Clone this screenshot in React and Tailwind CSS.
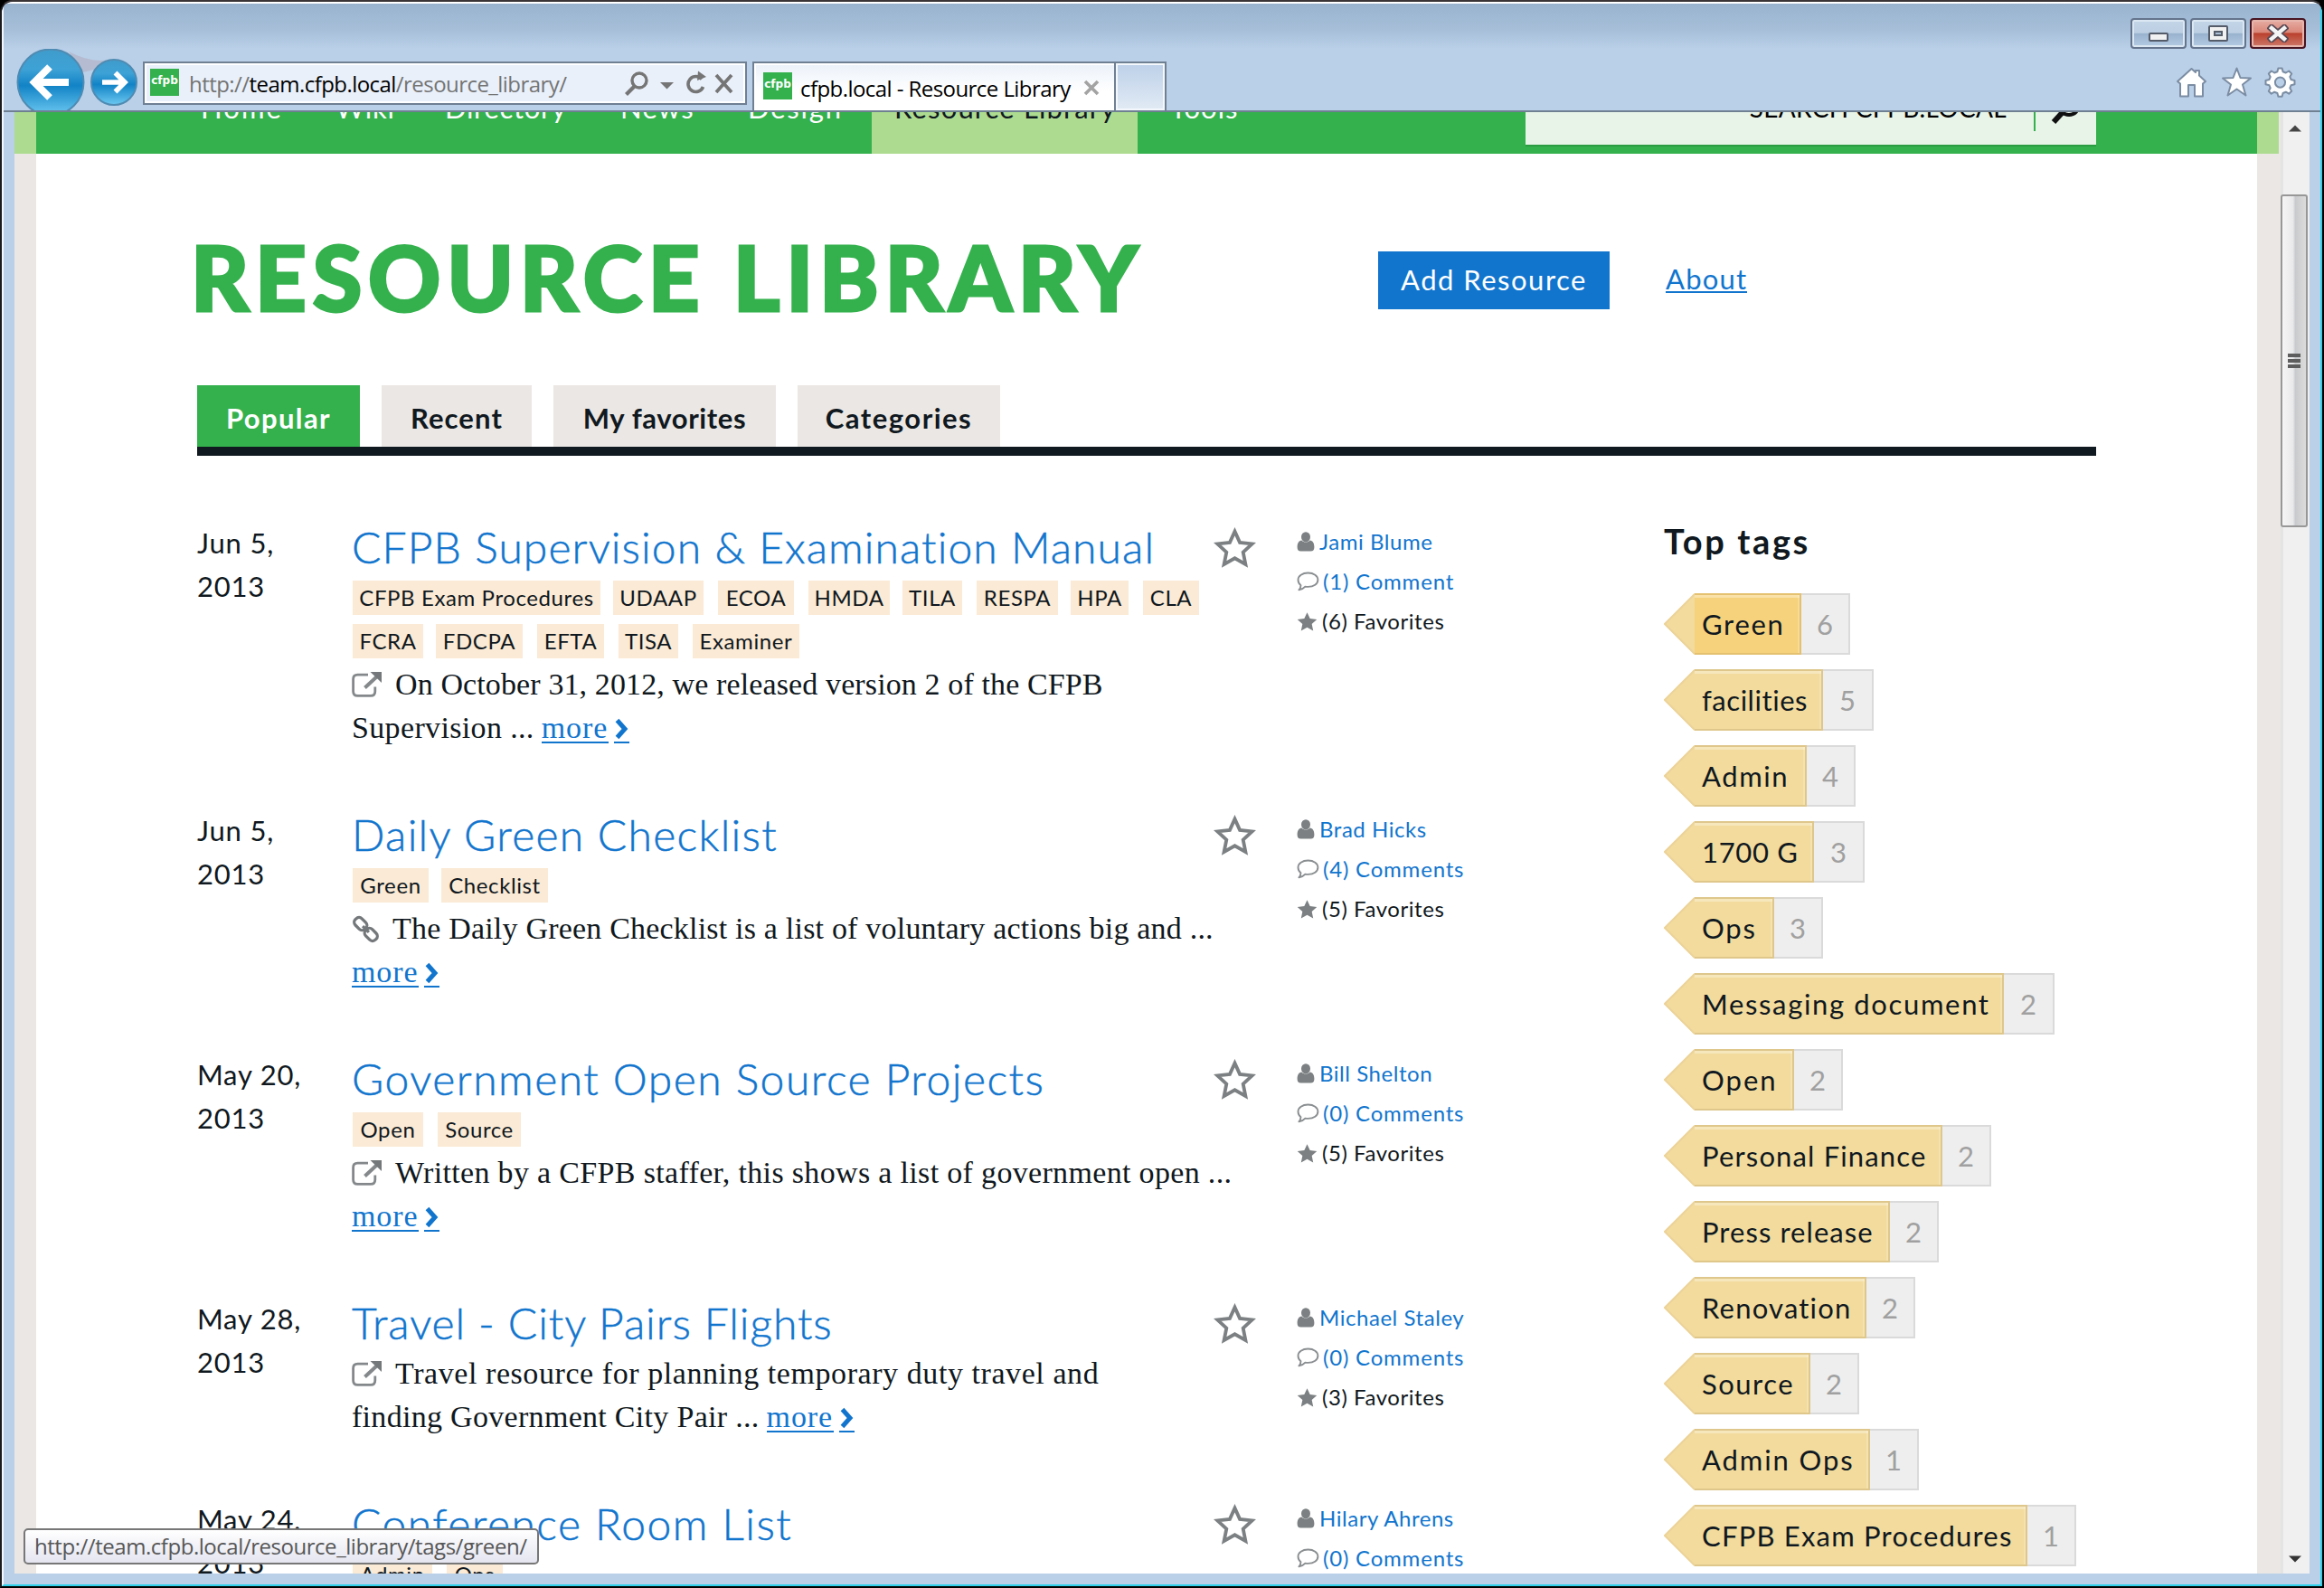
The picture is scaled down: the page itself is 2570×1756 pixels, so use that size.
const NAV = [
  { label: "Home", box: "w-[117px] pl-[4px] tracking-[2.1px]" },
  { label: "Wiki", box: "w-[121px] pl-[36px] tracking-[0.8px]" },
  { label: "Directory", box: "w-[194px] pl-[36px] tracking-[0.7px]" },
  { label: "News", box: "w-[142px] pl-[36px] tracking-[1.2px]" },
  { label: "Design", box: "w-[172px] pl-[35px] tracking-[1.8px]" },
  { label: "Resource Library", box: "w-[294px] pl-[25px] tracking-[1.15px] bg-[#addc91] text-[#101820]" },
  { label: "Tools", box: "w-[150px] pl-[36px] tracking-[1px]" },
];

const TABS = [
  { label: "Popular", box: "w-[180px] bg-[#34b14d] text-white tracking-[1.4px]" },
  { label: "Recent", box: "w-[166px] bg-[#ebe7e4] tracking-[1.1px]" },
  { label: "My favorites", box: "w-[246px] bg-[#ebe7e4] tracking-[0.6px]" },
  { label: "Categories", box: "w-[224px] bg-[#ebe7e4] tracking-[1.5px]" },
];

const ROWS = [
  {
    date: ["Jun 5,", "2013"],
    height: "h-[318px]",
    title: "CFPB Supervision & Examination Manual",
    titleCls: "tracking-[1.1px]",
    tags: [
      [
        ["CFPB Exam Procedures", "w-[274px] mr-[14px]"],
        ["UDAAP", "w-[100px] mr-[16px]"],
        ["ECOA", "w-[84px] mr-[16px]"],
        ["HMDA", "w-[90px] mr-[14px]"],
        ["TILA", "w-[66px] mr-[16px]"],
        ["RESPA", "w-[90px] mr-[14px]"],
        ["HPA", "w-[64px] mr-[16px]"],
        ["CLA", "w-[62px]"],
      ],
      [
        ["FCRA", "w-[78px] mr-[14px]"],
        ["FDCPA", "w-[96px] mr-[16px]"],
        ["EFTA", "w-[74px] mr-[16px]"],
        ["TISA", "w-[66px] mr-[16px]"],
        ["Examiner", "w-[118px]"],
      ],
    ],
    icon: "ext",
    lines: [
      ["On October 31, 2012, we released version 2 of the CFPB", "tracking-[0.12px]"],
      ["Supervision ...", "tracking-[0.35px]"],
    ],
    more: "inline",
    author: "Jami Blume",
    comments: "(1) Comment",
    favorites: "(6) Favorites",
  },
  {
    date: ["Jun 5,", "2013"],
    height: "h-[270px]",
    title: "Daily Green Checklist",
    titleCls: "tracking-[1.3px]",
    tags: [[["Green", "w-[84px] mr-[14px]"], ["Checklist", "w-[118px]"]]],
    icon: "link",
    lines: [["The Daily Green Checklist is a list of voluntary actions big and ...", "tracking-[0.2px]"]],
    more: "own",
    author: "Brad Hicks",
    comments: "(4) Comments",
    favorites: "(5) Favorites",
  },
  {
    date: ["May 20,", "2013"],
    height: "h-[270px]",
    title: "Government Open Source Projects",
    titleCls: "tracking-[1.5px]",
    tags: [[["Open", "w-[78px] mr-[16px]"], ["Source", "w-[92px]"]]],
    icon: "ext",
    lines: [["Written by a CFPB staffer, this shows a list of government open ...", "tracking-[0.33px]"]],
    more: "own",
    author: "Bill Shelton",
    comments: "(0) Comments",
    favorites: "(5) Favorites",
  },
  {
    date: ["May 28,", "2013"],
    height: "h-[222px]",
    title: "Travel - City Pairs Flights",
    titleCls: "tracking-[0.95px]",
    tags: [],
    icon: "ext",
    lines: [
      ["Travel resource for planning temporary duty travel and", "tracking-[0.57px]"],
      ["finding Government City Pair ...", "tracking-[0.3px]"],
    ],
    more: "inline",
    author: "Michael Staley",
    comments: "(0) Comments",
    favorites: "(3) Favorites",
  },
  {
    date: ["May 24,", "2013"],
    height: "h-[222px]",
    title: "Conference Room List",
    titleCls: "tracking-[1.5px]",
    tags: [[["Admin", "w-[88px] mr-[16px]"], ["Ops", "w-[62px]"]]],
    icon: null,
    lines: [],
    author: "Hilary Ahrens",
    comments: "(0) Comments",
  },
];

const TOP_TAGS = [
  ["Green", 6, "w-[118px] tracking-[1.7px] bg-[#f6d27c] border-[#e3c170]", "w-[54px]"],
  ["facilities", 5, "w-[142px] tracking-[0.55px] bg-[#f2db9c] border-[#dfc78c]", "w-[56px]"],
  ["Admin", 4, "w-[124px] tracking-[1.6px] bg-[#f2db9c] border-[#dfc78c]", "w-[54px]"],
  ["1700 G", 3, "w-[132px] tracking-[0.7px] bg-[#f2db9c] border-[#dfc78c]", "w-[56px]"],
  ["Ops", 3, "w-[88px] tracking-[1.8px] bg-[#f2db9c] border-[#dfc78c]", "w-[54px]"],
  ["Messaging document", 2, "w-[342px] tracking-[1.65px] bg-[#f2db9c] border-[#dfc78c]", "w-[56px]"],
  ["Open", 2, "w-[110px] tracking-[2px] bg-[#f2db9c] border-[#dfc78c]", "w-[54px]"],
  ["Personal Finance", 2, "w-[274px] tracking-[1.15px] bg-[#f2db9c] border-[#dfc78c]", "w-[54px]"],
  ["Press release", 2, "w-[216px] tracking-[1.05px] bg-[#f2db9c] border-[#dfc78c]", "w-[54px]"],
  ["Renovation", 2, "w-[190px] tracking-[1.2px] bg-[#f2db9c] border-[#dfc78c]", "w-[54px]"],
  ["Source", 2, "w-[128px] tracking-[1.5px] bg-[#f2db9c] border-[#dfc78c]", "w-[54px]"],
  ["Admin Ops", 1, "w-[194px] tracking-[1.9px] bg-[#f2db9c] border-[#dfc78c]", "w-[54px]"],
  ["CFPB Exam Procedures", 1, "w-[368px] tracking-[1.2px] bg-[#f2db9c] border-[#dfc78c]", "w-[54px]"],
];

const STAR =
  "M12 1.2 L15.3 8.4 L23.2 9.3 L17.4 14.6 L19 22.4 L12 18.5 L5 22.4 L6.6 14.6 L0.8 9.3 L8.7 8.4 Z";

function StarOutline() {
  return (
    <svg viewBox="0 0 24 24" className="h-[46px] w-[47px]" fill="none" stroke="#7c8082" strokeWidth="2" strokeLinejoin="miter">
      <path d="M12 2.4 L14.9 8.8 L22 9.6 L16.8 14.4 L18.2 21.4 L12 17.9 L5.8 21.4 L7.2 14.4 L2 9.6 L9.1 8.8 Z" />
    </svg>
  );
}

function UserIcon() {
  return (
    <svg viewBox="0 0 20 22" className="h-[22px] w-[20px]" fill="#7c8082">
      <ellipse cx="10" cy="5.8" rx="5" ry="5.6" />
      <path d="M5.4 9.4 C2.4 9.8 0.6 12.4 0.6 17 C0.6 20 1.9 21.6 4.4 21.6 H15.6 C18.1 21.6 19.4 20 19.4 17 C19.4 12.4 17.6 9.8 14.6 9.4 C12 12.2 8 12.2 5.4 9.4 Z" />
    </svg>
  );
}

function CommentIcon() {
  return (
    <svg viewBox="0 0 25 22" className="h-[22px] w-[25px]" fill="none" stroke="#8a8e90" strokeWidth="1.9" strokeLinejoin="round">
      <path d="M12.5 1.5 C18.8 1.5 23.4 4.9 23.4 9.2 C23.4 13.5 18.8 16.9 12.5 16.9 C11.4 16.9 10.4 16.8 9.4 16.6 C7.6 18.6 5.4 19.9 2.4 20.4 C3.7 19 4.4 17.3 4.5 15.2 C2.6 13.7 1.5 11.5 1.5 9.2 C1.5 4.9 6.2 1.5 12.5 1.5 Z" />
    </svg>
  );
}

function ExternalIcon() {
  return (
    <svg viewBox="0 0 34 30" className="mt-[9px] mr-[14px] h-[30px] w-[34px] shrink-0" fill="none" stroke="#84888a">
      <path d="M18 4.2 H6.5 C3.4 4.2 1.6 6 1.6 9 V22.5 C1.6 25.6 3.4 27.4 6.5 27.4 H21 C24.1 27.4 25.8 25.6 25.8 22.5 V17.5" strokeWidth="2.8" />
      <path d="M14.5 18.5 L28 6" strokeWidth="4" />
      <path d="M20.5 1 H33 V13 Z" fill="#74787a" stroke="none" />
    </svg>
  );
}

function LinkIcon() {
  return (
    <svg viewBox="0 0 32 32" className="mt-[9px] mr-[14px] h-[31px] w-[31px] shrink-0" fill="none" stroke="#74787a" strokeWidth="3.4">
      <rect x="2.2" y="4.6" width="15.5" height="10.5" rx="4.6" transform="rotate(45 10 10)" />
      <rect x="14.3" y="16.9" width="15.5" height="10.5" rx="4.6" transform="rotate(45 22 22)" />
      <path d="M12.5 12.5 L19.5 19.5" />
    </svg>
  );
}

function More() {
  return (
    <span className="flex text-[#1175ce]">
      <span className="h-[41px] w-[74px] border-b-[2px] border-[#1175ce] tracking-[0.9px]">more</span>
      <span className="ml-[6px] flex h-[41px] w-[17px] justify-center border-b-[2px] border-[#1175ce]">
        <svg viewBox="0 0 15 24" className="mt-[13px] h-[24px] w-[15px]" fill="none" stroke="#1175ce" strokeWidth="5">
          <path d="M2.5 2.5 L11 12 L2.5 21.5" />
        </svg>
      </span>
    </span>
  );
}

function Favicon() {
  return (
    <span className="flex h-[30px] w-[32px] shrink-0 items-start justify-center bg-[#34b14d] font-['DejaVu_Sans'] text-[12px] leading-[27px] font-bold text-white">
      cfpb
    </span>
  );
}

function Chrome() {
  return (
    <header className="flex h-[120px] shrink-0 flex-col border-b-[2px] border-[#6f8093] bg-[linear-gradient(180deg,#99b3cf_0px,#a6bed8_28px,#bad0e9_50px,#bad0e9_118px)] font-['Open_Sans',sans-serif]">
      <div className="flex h-[50px] justify-end gap-[4px] pt-[16px] pr-[16px]">
        <div className="flex h-[34px] w-[62px] items-end justify-center rounded-[4px] border-[2px] border-[#64748c] bg-[linear-gradient(180deg,#c3d5e7_0%,#bccfe3_48%,#98b1cd_50%,#b5cce4_100%)] pb-[6px] shadow-[inset_0_0_0_2px_#dbe7f3]">
          <span className="h-[10px] w-[22px] rounded-[2px] border-[2px] border-[#545b69] bg-[#f1f1f1]" />
        </div>
        <div className="flex h-[34px] w-[62px] items-center justify-center rounded-[4px] border-[2px] border-[#64748c] bg-[linear-gradient(180deg,#c3d5e7_0%,#bccfe3_48%,#98b1cd_50%,#b5cce4_100%)] shadow-[inset_0_0_0_2px_#dbe7f3]">
          <span className="flex h-[18px] w-[22px] items-center justify-center rounded-[2px] border-[2px] border-[#545b69] bg-[#f1f1f1]">
            <span className="h-[6px] w-[10px] border-[2px] border-[#545b69] bg-[#a9bdd4]" />
          </span>
        </div>
        <div className="flex h-[34px] w-[62px] items-center justify-center rounded-[4px] border-[2px] border-[#481421] bg-[linear-gradient(180deg,#e7ada4_0%,#d98678_46%,#b9402d_50%,#cf7a6b_100%)] shadow-[inset_0_0_0_2px_#e6b5ac]">
          <svg viewBox="0 0 24 20" className="h-[20px] w-[24px]" fill="none">
            <path d="M5 4 L19 16 M19 4 L5 16" stroke="#5a4a55" strokeWidth="8" strokeLinecap="square" />
            <path d="M5 4 L19 16 M19 4 L5 16" stroke="#f4f4f4" strokeWidth="4.4" strokeLinecap="square" />
          </svg>
        </div>
      </div>

      <div className="flex h-[68px] justify-between">
        <div className="flex pl-[12px]">
          <svg viewBox="0 0 140 68" className="mr-[2px] h-[68px] w-[140px]">
            <defs>
              <linearGradient id="orb" x1="0" y1="0" x2="0" y2="1">
                <stop offset="0" stopColor="#3f9ccb" />
                <stop offset="0.3" stopColor="#3ea2d6" />
                <stop offset="0.55" stopColor="#1283c6" />
                <stop offset="1" stopColor="#6cc9f1" />
              </linearGradient>
            </defs>
            <path d="M60 3 Q85 16 104 12 L92 22 L76 26 Z" fill="#b4b6ca" opacity="0.8" />
            <circle cx="40" cy="37" r="36.5" fill="url(#orb)" stroke="#4f8bb2" strokeWidth="2" />
            <circle cx="110" cy="37" r="25" fill="url(#orb)" stroke="#4f8bb2" strokeWidth="2" />
            <path d="M60 37 H24 M39 20 L22 37 L39 54" fill="none" stroke="#fff" strokeWidth="8" />
            <path d="M97 37 H121 M111.500 26.500 L122 37 L111.500 47.500" fill="none" stroke="#fff" strokeWidth="5.600" />
          </svg>
          <div className="mt-[14px] flex h-[48px] w-[668px] items-start border-[2px] border-[#6f8093] bg-[#e9f0fa] pt-[6px] pl-[6px] shadow-[inset_0_0_0_2px_#fff]">
            <Favicon />
            <span className="ml-[11px] w-[480px] text-[24px] leading-[34px] tracking-[-0.55px] whitespace-nowrap text-[#747474]">
              http://<span className="text-black">team.cfpb.local</span>/resource_library/
            </span>
            <svg viewBox="0 0 126 30" className="mt-[2px] h-[30px] w-[126px]" fill="none" stroke="#757575">
              <circle cx="18" cy="11" r="8" strokeWidth="3.4" />
              <path d="M12.500 17.500 L3.500 26.500" strokeWidth="4.200" />
              <path d="M41 13 H56 L48.500 20.500 Z" fill="#757575" stroke="none" />
              <path d="M87 9.500 A8.500 8.500 0 1 0 88.500 18" strokeWidth="3.600" />
              <path d="M83 0.500 L92 7 L82 11 Z" fill="#757575" stroke="none" />
              <path d="M103 5 L120 24 M120 5 L103 24" strokeWidth="3.800" />
            </svg>
          </div>
          <div className="mt-[14px] ml-[6px] flex h-[54px] w-[402px] items-start border-[2px] border-b-0 border-[#6f8093] bg-[linear-gradient(180deg,#ebf1f9,#ffffff_60%)] pt-[10px] pl-[10px] shadow-[inset_2px_2px_0_#fff]">
            <Favicon />
            <span className="ml-[9px] w-[313px] text-[24px] leading-[36px] tracking-[-0.56px] whitespace-nowrap text-black">
              cfpb.local - Resource Library
            </span>
            <svg viewBox="0 0 18 18" className="mt-[8px] h-[18px] w-[18px]" fill="none" stroke="#a3a3a3" strokeWidth="3.600">
              <path d="M2 2 L16 16 M16 2 L2 16" />
            </svg>
          </div>
          <div className="mt-[14px] h-[54px] w-[56px] border-[2px] border-b-0 border-l-0 border-[#6f8093] bg-[linear-gradient(180deg,#bcd0e8,#e2ebf5)] shadow-[inset_0_0_0_2px_#f4f8fc]" />
        </div>
        <svg viewBox="0 0 136 36" className="mt-[20px] mr-[24px] h-[36px] w-[136px]" fill="#fff" stroke="#7b8da3" strokeWidth="2" strokeLinejoin="round">
          <path d="M5 18.500 L2 16 L17.500 2 L22 6 V4 H26 V9.500 L33 16 L30 18.500 V32.500 H21 V20 H14 V32.500 H5 Z" />
          <path d="M67.500 1.500 L71.500 12 L83 12.500 L74 19.500 L77.500 31.500 L67.500 24.500 L57.500 31.500 L61 19.500 L52 12.500 L63.500 12 Z" />
          <path
            fillRule="evenodd"
            d="M113.400 1.500 H117.600 L118.600 5.200 L121.800 6.500 L125.200 4.500 L128.200 7.500 L126.300 10.900 L127.600 14 L131.500 15 V19.200 L127.600 20.200 L126.300 23.300 L128.200 26.700 L125.200 29.700 L121.800 27.700 L118.600 29 L117.600 32.700 H113.400 L112.400 29 L109.200 27.700 L105.800 29.700 L102.800 26.700 L104.700 23.300 L103.400 20.200 L99.500 19.200 V15 L103.400 14 L104.700 10.900 L102.800 7.500 L105.800 4.500 L109.200 6.500 L112.400 5.200 Z M115.500 11.500 A5.600 5.600 0 1 0 115.500 22.700 A5.600 5.600 0 1 0 115.500 11.500 Z"
          />
        </svg>
      </div>
    </header>
  );
}

function Row({ row }) {
  return (
    <article className={`flex shrink-0 ${row.height}`}>
      <div className="-mt-[4px] w-[171px] text-[31px] leading-[48px] tracking-[0.8px]">
        <div>{row.date[0]}</div>
        <div>{row.date[1]}</div>
      </div>
      <div className="w-[953px]">
        <h2
          className={`h-[58px] text-[48px] leading-[50px] font-light whitespace-nowrap text-[#1175ce] [-webkit-text-stroke:0.5px_#1175ce] ${row.titleCls}`}
        >
          {row.title}
        </h2>
        {row.tags.map((line, i) => (
          <div key={i} className="flex h-[48px] pt-[4px] pl-[1px]">
            {line.map(([label, cls]) => (
              <span
                key={label}
                className={`h-[38px] shrink-0 bg-[#fbead5] text-center text-[24px] leading-[38px] tracking-[0.6px] whitespace-nowrap ${cls}`}
              >
                {label}
              </span>
            ))}
          </div>
        ))}
        <div className="-mt-[1px] font-['Liberation_Serif',serif] text-[34px] leading-[48px] whitespace-nowrap">
          {row.lines.map(([text, cls], i) => (
            <div key={i} className="flex h-[48px]">
              {i === 0 && row.icon === "ext" && <ExternalIcon />}
              {i === 0 && row.icon === "link" && <LinkIcon />}
              <span className={cls}>{text}</span>
              {i === 1 && row.more === "inline" && (
                <span className="ml-[8px] flex">
                  <More />
                </span>
              )}
            </div>
          ))}
          {row.more === "own" && <More />}
        </div>
      </div>
      <div className="mt-[3px] w-[92px]">
        <StarOutline />
      </div>
      <div className="-mt-[3px] text-[24px] leading-[44px] tracking-[0.55px] whitespace-nowrap">
        <div className="flex items-center gap-[5px] text-[#1175ce]">
          <UserIcon />
          {row.author}
        </div>
        <div className="flex items-center gap-[4px] tracking-[0.8px] text-[#1175ce]">
          <CommentIcon />
          {row.comments}
        </div>
        {row.favorites && (
          <div className="flex items-center gap-[5px]">
            <svg viewBox="0 0 24 24" className="h-[23px] w-[23px]" fill="#7c8082">
              <path d={STAR} />
            </svg>
            {row.favorites}
          </div>
        )}
      </div>
    </article>
  );
}

function TopTag({ tag }) {
  const [label, count, body, countBox] = tag;
  return (
    <li className="flex h-[68px]">
      <svg viewBox="0 0 34 68" className="h-[68px] w-[34px]">
        <path d="M34 0 L0 34 L34 68 Z" fill="#f2db9c" />
        <path d="M34 1 L1 34 L34 67" fill="none" stroke="#ecd39a" strokeWidth="2" />
      </svg>
      <span className={`h-[68px] border-y-[2px] border-r-[2px] pl-[8px] leading-[64px] whitespace-nowrap shadow-[inset_0_3px_0_#ffffff55,inset_-2px_0_0_#ffffff33] ${body}`}>
        {label}
      </span>
      <span className={`h-[68px] border-y-[2px] border-r-[2px] border-[#dadada] bg-[#eeeeee] text-center leading-[64px] text-[#a0a0a0] ${countBox}`}>
        {count}
      </span>
    </li>
  );
}

function Page() {
  return (
    <div className="flex h-full w-[2506px] overflow-hidden bg-[#ebe7e4]">
      <div className="h-[46px] w-[24px] bg-[#addc91]" />
      <div className="flex h-full w-[2456px] flex-col bg-white">
        <nav className="flex h-[46px] shrink-0 items-start justify-between overflow-hidden bg-[#34b14d] pr-[178px] pl-[178px] text-[31px] text-white">
          <div className="flex">
            {NAV.map((n) => (
              <span key={n.label} className={`-mt-[29px] h-[75px] leading-[48px] whitespace-nowrap ${n.box}`}>
                {n.label}
              </span>
            ))}
          </div>
          <div className="-mt-[29px] flex h-[65px] w-[631px] justify-end bg-[#e8f4e8] text-black shadow-[0_2px_0_#2b9c42]">
            <span className="text-[28px] leading-[49px] tracking-[0.32px]">SEARCH CFPB.LOCAL</span>
            <span className="ml-[30px] h-[50px] w-[2px] bg-[#34b14d]" />
            <svg viewBox="0 0 36 44" className="mr-[15px] ml-[16px] h-[44px] w-[36px]" fill="none" stroke="#101010">
              <circle cx="21" cy="21" r="11" strokeWidth="4" />
              <path d="M14 29 L4 40" strokeWidth="6" />
            </svg>
          </div>
        </nav>

        <div className="flex shrink-0 pt-[86px] pl-[178px]">
          <h1 className="-ml-[7px] w-[1313px] text-[99px] leading-[100px] font-black tracking-[6.8px] whitespace-nowrap text-[#34b14d] [-webkit-text-stroke:3px_#34b14d]">
            RESOURCE LIBRARY
          </h1>
          <button className="mt-[22px] h-[64px] w-[256px] bg-[#1175ce] pb-[2px] text-[31px] leading-[60px] tracking-[1.5px] whitespace-nowrap text-white">
            Add Resource
          </button>
          <a className="mt-[22px] ml-[62px] h-[46px] border-b-[2px] border-[#1175ce] text-[31px] leading-[60px] tracking-[1.2px] text-[#1175ce]">
            About
          </a>
        </div>

        <div className="mt-[70px] ml-[178px] flex h-[78px] w-[2100px] shrink-0 gap-[24px] border-b-[10px] border-[#101820] text-[31px] font-bold">
          {TABS.map((t) => (
            <span key={t.label} className={`pt-[4px] text-center leading-[64px] whitespace-nowrap ${t.box}`}>
              {t.label}
            </span>
          ))}
        </div>

        <div className="flex min-h-0 flex-1 pl-[178px]">
          <main className="flex w-[1622px] flex-col pt-[76px]">
            {ROWS.map((r) => (
              <Row key={r.title} row={r} />
            ))}
          </main>
          <aside className="pt-[70px] text-[31px]">
            <h3 className="mb-[34px] text-[38px] leading-[48px] font-bold tracking-[2.6px]">Top tags</h3>
            <ul className="flex flex-col gap-[16px]">
              {TOP_TAGS.map((t) => (
                <TopTag key={t[0]} tag={t} />
              ))}
            </ul>
          </aside>
        </div>
      </div>
      <div className="h-[46px] w-[24px] bg-[#addc91]" />
    </div>
  );
}

function ScrollBar() {
  return (
    <div className="flex h-full w-[32px] flex-col bg-[#f0f0f0] shadow-[inset_3px_0_0_#e4e4e4]">
      <svg viewBox="0 0 16 8" className="mt-[14px] ml-[9px] h-[8px] w-[14px]" fill="#444">
        <path d="M0 8 L8 0 L16 8 Z" />
      </svg>
      <div className="mt-[69px] flex h-[368px] w-[30px] flex-col items-center rounded-[3px] border-[2px] border-[#979797] bg-[linear-gradient(90deg,#f5f5f5_0%,#e9e9eb_45%,#c9cacd_55%,#dcdcdc_100%)] pt-[174px]">
        <div className="flex flex-col gap-[2px]">
          <span className="h-[4px] w-[14px] bg-[#5d5d5d]" />
          <span className="h-[4px] w-[14px] bg-[#5d5d5d]" />
          <span className="h-[4px] w-[14px] bg-[#5d5d5d]" />
        </div>
      </div>
      <svg viewBox="0 0 16 8" className="mt-auto mb-[12px] ml-[9px] h-[8px] w-[14px]" fill="#333">
        <path d="M0 0 L8 8 L16 0 Z" />
      </svg>
    </div>
  );
}

export default function App() {
  return (
    <div className="h-[1756px] w-[2570px] overflow-hidden bg-black">
      <div className="relative flex h-[1756px] w-[2570px] flex-col overflow-hidden rounded-t-[14px] border-2 border-t-[#3a3436] border-r-black border-b-black border-l-[#1c1a1c] bg-[#bad0e9]">
        <div className="flex h-[1752px] flex-col rounded-t-[12px] border-2 border-t-white border-r-[#2fd0ea] border-b-[#2fd0ea] border-l-[#f2f7fc]">
          <Chrome />
          <div className="ml-[12px] flex h-[1616px] w-[2538px] shrink-0 bg-white font-['Lato',sans-serif] text-[#101820]">
            <Page />
            <ScrollBar />
          </div>
        </div>
        <div className="absolute top-[1688px] left-[24px] h-[40px] w-[570px] rounded-[5px] border-[2px] border-[#777777] bg-[linear-gradient(180deg,#ffffff,#e4e5f0)] pl-[10px] font-['Open_Sans',sans-serif] text-[24px] leading-[35px] tracking-[-0.46px] whitespace-nowrap text-[#575757]">
          http://team.cfpb.local/resource_library/tags/green/
        </div>
      </div>
    </div>
  );
}
